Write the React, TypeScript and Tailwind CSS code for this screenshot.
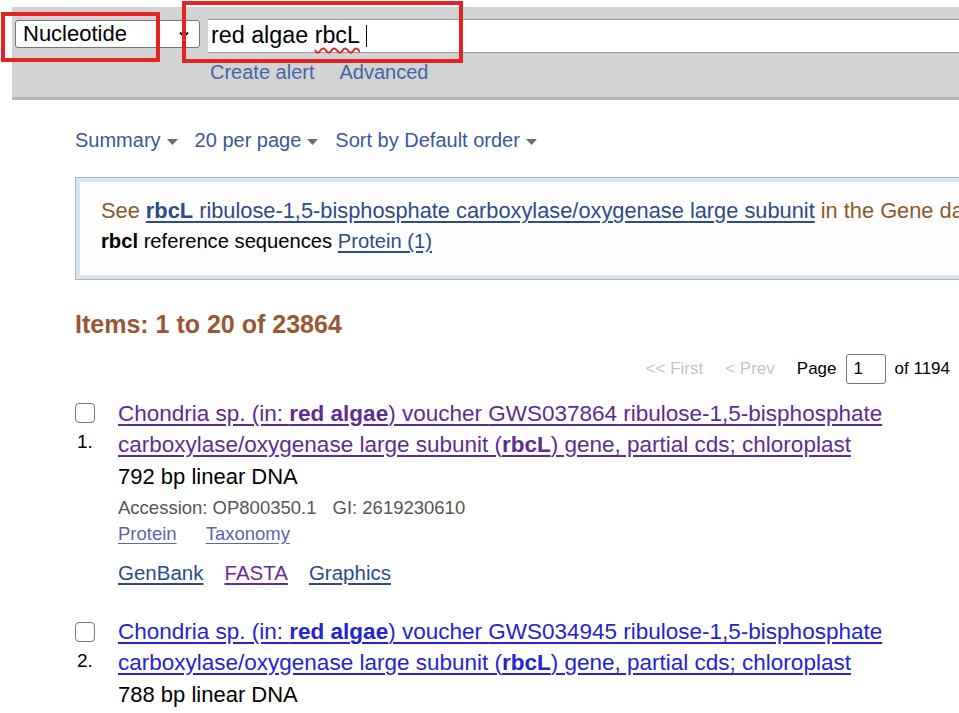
import React from 'react';

const Caret = () => (
  <svg className="ml-[6px] mt-[4px] w-[11px] h-[6px]" viewBox="0 0 11 6">
    <path d="M0 0 L11 0 L5.5 6 Z" fill="#6b6b6b" />
  </svg>
);

const Bold = ({ children }: { children: React.ReactNode }) => <b className="font-bold">{children}</b>;

interface Item {
  n: number;
  voucher: string;
  bp: string;
  visited?: boolean;
}

const ResultItem = ({ item }: { item: Item }) => {
  const titleColor = item.visited ? 'text-[#5e2c92]' : 'text-[#2424cf]';
  return (
    <div className="flex">
      <div className="w-[43px] shrink-0 flex flex-col">
        <div className="mt-[5.5px] w-[20px] h-[20px] rounded-[4px] border-[1.5px] border-[#767676] bg-white" />
        <div className="mt-[6px] ml-[2px] text-[19px] leading-[26px] text-black">{item.n}.</div>
      </div>
      <div className="flex flex-col">
        <a className={`text-[22.5px] leading-[31px] underline underline-offset-[3px] ${titleColor}`}>
          Chondria sp. (in: <Bold>red algae</Bold>) voucher {item.voucher} ribulose-1,5-bisphosphate
          <br />
          carboxylase/oxygenase large subunit (<Bold>rbcL</Bold>) gene, partial cds; chloroplast
        </a>
        <div className="text-[22px] leading-[34px] text-black">{item.bp} bp linear DNA</div>
        {item.visited && (
          <>
            <div className="text-[18.5px] leading-[28px] text-[#555555]">
              Accession: OP800350.1<span className="ml-[16px]">GI: 2619230610</span>
            </div>
            <div className="text-[18.5px] leading-[24px] flex gap-[29px] text-[#5d64b0]">
              <a className="underline underline-offset-[3px]">Protein</a>
              <a className="underline underline-offset-[3px]">Taxonomy</a>
            </div>
            <div className="mt-[13px] text-[20.5px] leading-[28px] flex gap-[21px]">
              <a className="underline underline-offset-[3px] text-[#2f4a8b]">GenBank</a>
              <a className="underline underline-offset-[3px] text-[#6a2a9a]">FASTA</a>
              <a className="underline underline-offset-[3px] text-[#2f4a8b]">Graphics</a>
            </div>
          </>
        )}
      </div>
    </div>
  );
};

export default function App() {
  return (
    <div className="relative w-[959px] h-[713px] overflow-hidden bg-white font-['Liberation_Sans',Arial,sans-serif]">
      {/* search bar */}
      <div className="mt-[7px] ml-[12px] h-[93px] bg-[#d3d3d3] border-b-[3px] border-[#b4b4b4]">
        <div className="flex items-start">
          <div className="ml-[3px] mt-[13px] w-[185px] h-[28px] rounded-[3px] border border-[#767676] bg-white flex items-center pl-[7px] pr-[10px]">
            <span className="text-[22px] leading-none text-black flex-1">Nucleotide</span>
            <svg className="w-[10px] h-[7px]" viewBox="0 0 10 7">
              <path d="M1 1.5 L5 5.5 L9 1.5" stroke="#111" strokeWidth="2" fill="none" />
            </svg>
          </div>
          <div className="ml-[8px] mt-[12px] flex-1 h-[34px] bg-white border-y border-[#9a9a9a] flex items-center pl-[3px]">
            <span className="text-[23.3px] leading-none text-black">
              red algae <span className="underline decoration-wavy decoration-[#e02020] decoration-[1.5px] underline-offset-[4px]">rbcL</span>
            </span>
            <span className="ml-[6px] w-px h-[22px] bg-black" />
          </div>
        </div>
        <div className="ml-[198px] mt-[6px] flex gap-[25px] text-[20px] leading-[26px] text-[#4664a8]">
          <a>Create alert</a>
          <a>Advanced</a>
        </div>
      </div>

      <div className="ml-[75px]">
        {/* display options */}
        <div className="mt-[28px] flex items-center text-[20px] leading-[24px] text-[#39599b]">
          <span>Summary</span>
          <Caret />
          <span className="ml-[17px]">20 per page</span>
          <Caret />
          <span className="ml-[17px]">Sort by Default order</span>
          <Caret />
        </div>

        {/* gene sensor */}
        <div className="mt-[25px] border-y border-l border-[#a3b5cc] bg-[#dbe3ec] py-[4px] pl-[4px]">
          <div className="bg-[#fdfdfd] pl-[21px] pt-[14px] pb-[19px] text-[20.2px] leading-[30px] whitespace-nowrap">
            <div className="text-[#8b5a2b] text-[21.8px]">
              See{' '}
              <a className="text-[#2f4a8b] underline underline-offset-[3px]">
                <Bold>rbcL</Bold> ribulose-1,5-bisphosphate carboxylase/oxygenase large subunit
              </a>{' '}
              in the Gene database
            </div>
            <div className="text-black">
              <Bold>rbcl</Bold> reference sequences{' '}
              <a className="text-[#2f4a8b] underline underline-offset-[3px]">Protein (1)</a>
            </div>
          </div>
        </div>

        <h2 className="mt-[29px] text-[25px] leading-[30px] font-bold text-[#985735]">Items: 1 to 20 of 23864</h2>

        {/* pager */}
        <div className="mt-[15px] h-[30px] flex items-center justify-end pr-[9px] text-[17px]">
          <span className="text-[#c4c4c4]">&lt;&lt; First</span>
          <span className="ml-[22px] text-[#c4c4c4]">&lt; Prev</span>
          <span className="ml-[22px] text-black">Page</span>
          <div className="ml-[9px] w-[40px] h-[30px] rounded-[3px] border border-[#767676] flex items-center pl-[7px] text-black">1</div>
          <span className="ml-[9px] text-black">of 1194</span>
        </div>

        <div className="mt-[13.5px] flex flex-col gap-[29.5px]">
          <ResultItem item={{ n: 1, voucher: 'GWS037864', bp: '792', visited: true }} />
          <ResultItem item={{ n: 2, voucher: 'GWS034945', bp: '788' }} />
        </div>
      </div>

      {/* annotation boxes */}
      <div className="absolute left-[1px] top-[12px] w-[159px] h-[50px] border-[4px] border-[#e32424]" />
      <div className="absolute left-[182px] top-[1px] w-[281px] h-[62px] border-[4px] border-[#e32424]" />
    </div>
  );
}
